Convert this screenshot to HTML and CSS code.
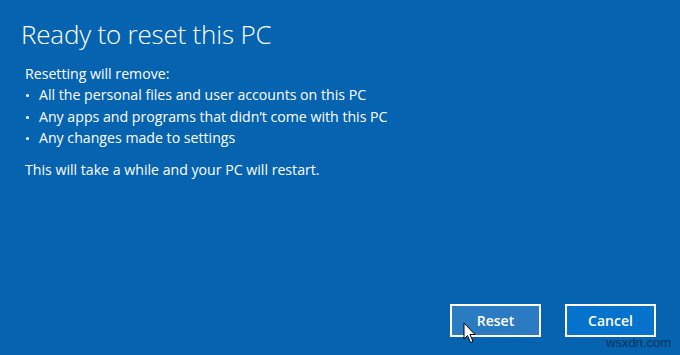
FILE: index.html
```html
<!DOCTYPE html>
<html>
<head>
<meta charset="utf-8">
<link rel="stylesheet" href="styles.css">
</head>
<body>
<div class="dialog">
  <h1 class="title">Ready to reset this PC</h1>
  <div class="body">
    <p class="lead">Resetting will remove:</p>
    <ul class="list">
      <li>All the personal files and user accounts on this PC</li>
      <li>Any apps and programs that didn’t come with this PC</li>
      <li>Any changes made to settings</li>
    </ul>
    <p class="note">This will take a while and your PC will restart.</p>
  </div>
  <div class="actions">
    <button class="btn btn-reset">Reset</button>
    <button class="btn btn-cancel">Cancel</button>
  </div>
  <svg class="cursor" width="14" height="22" viewBox="0 0 14 22">
    <path d="M1 1 L1 17 L4.5 13.5 L7.5 20.5 L10 19.5 L7 12.5 L12 12.5 Z" fill="#fff" stroke="#000" stroke-width="1" stroke-linejoin="miter"/>
  </svg>
  <span class="watermark">wsxdn.com</span>
</div>
</body>
</html>
```
FILE: styles.css
```css
* { box-sizing: border-box; }
html, body { margin: 0; padding: 0; }
body {
  width: 680px;
  height: 355px;
  background: #0563b0;
  font-family: "Open Sans", "Noto Sans", sans-serif;
  color: #fff;
  overflow: hidden;
}
.dialog {
  position: relative;
  width: 680px;
  height: 355px;
  display: flex;
  flex-direction: column;
}
.title {
  margin: 0;
  padding: 16px 0 0 21px;
  font-weight: 300;
  font-size: 26px;
  line-height: 36px;
  letter-spacing: -0.2px;
}
.body {
  padding: 11px 0 0 25px;
  font-size: 14.15px;
  line-height: 21.3px;
}
.lead { margin: 0; }
.list {
  margin: 0;
  padding: 0;
  list-style: none;
}
.list li {
  position: relative;
  padding-left: 14px;
}
.list li::before {
  content: "";
  position: absolute;
  left: 1px;
  top: 10px;
  width: 3px;
  height: 3px;
  border-radius: 50%;
  background: #fff;
}
.note { margin: 11px 0 0; }
.actions {
  margin-top: auto;
  display: flex;
  justify-content: flex-end;
  gap: 24px;
  padding: 0 24px 18px 0;
}
.btn {
  width: 91px;
  height: 33px;
  border: 2px solid #fff;
  color: #fff;
  font-family: "Open Sans", "Noto Sans", sans-serif;
  font-weight: 600;
  font-size: 14px;
  padding: 0;
  cursor: default;
}
.btn-reset { background: #2a7bc1; }
.btn-cancel { background: #0573cb; }
.cursor {
  position: absolute;
  left: 463px;
  top: 322px;
}
.watermark {
  position: absolute;
  left: 606px;
  top: 335px;
  font-family: "Liberation Sans", Arial, sans-serif;
  font-size: 13px;
  color: #0a2a4a;
  opacity: 0.85;
}
```
